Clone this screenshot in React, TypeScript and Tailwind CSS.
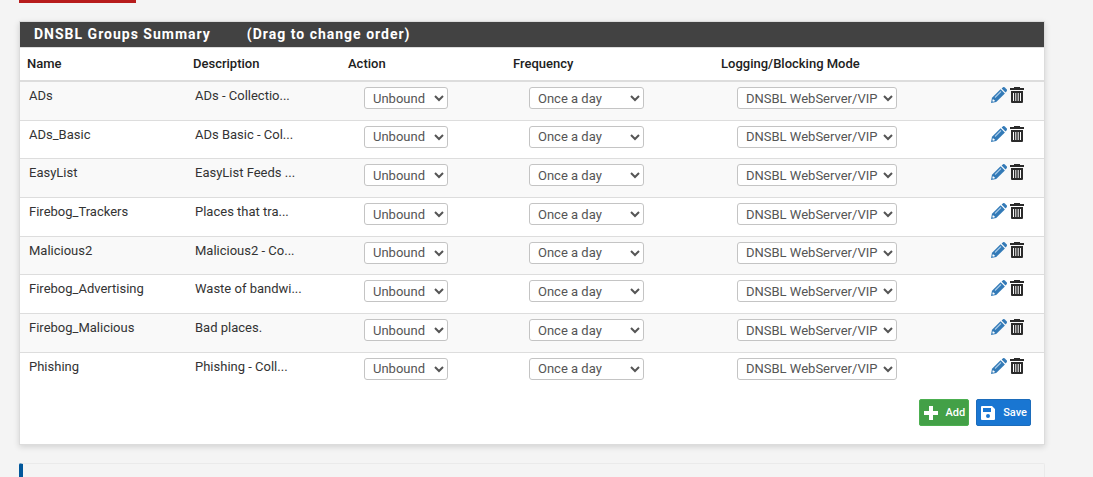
import React from "react";

type Group = { name: string; description: string };

const groups: Group[] = [
  { name: "ADs", description: "ADs - Collectio..." },
  { name: "ADs_Basic", description: "ADs Basic - Col..." },
  { name: "EasyList", description: "EasyList Feeds ..." },
  { name: "Firebog_Trackers", description: "Places that tra..." },
  { name: "Malicious2", description: "Malicious2 - Co..." },
  { name: "Firebog_Advertising", description: "Waste of bandwi..." },
  { name: "Firebog_Malicious", description: "Bad places." },
  { name: "Phishing", description: "Phishing - Coll..." },
];

function PencilIcon() {
  return (
    <svg viewBox="0 0 16 16" className="block size-4" aria-hidden="true">
      <path fill="#337ab7" d="M11.800.4a1.500 1.500 0 0 1 2 0l1.800 1.800a1.500 1.500 0 0 1 0 2l-1.100 1.200L10.600 1.600z" />
      <path fill="#337ab7" d="M9.600 2.200l4.300 4.300-8.700 8.500L0 16l1-5.200z" />
      <path d="M4 10.500L10 4.500" stroke="#a9cbe8" strokeWidth="1.100" />
      <path d="M1.900 11.900l2.300 2.200-2.200.6-.7-.7z" fill="#fff" />
    </svg>
  );
}

function TrashIcon() {
  return (
    <svg viewBox="0 0 14 16" className="block h-4 w-[14px]" aria-hidden="true">
      <path fill="#2b2b2b" d="M4 0h6v1h4v2H0V1h4z" />
      <path
        fill="#2b2b2b"
        fillRule="evenodd"
        d="M1 4h12v11a1 1 0 0 1-1 1H2a1 1 0 0 1-1-1zM3 6v8h1V6zM5.300 6v8h1V6zM7.700 6v8h1V6zM10 6v8h1V6z"
      />
    </svg>
  );
}

function PlusIcon() {
  return (
    <svg viewBox="0 0 14 14" className="block size-[14px]" aria-hidden="true">
      <path fill="#fff" d="M5 0h4v5h5v4H9v5H5V9H0V5h5z" />
    </svg>
  );
}

function SaveIcon() {
  return (
    <svg viewBox="0 0 14 14" className="block size-[14px]" aria-hidden="true">
      <path
        fill="#fff"
        fillRule="evenodd"
        d="M1 0h10l3 3v10a1 1 0 0 1-1 1H1a1 1 0 0 1-1-1V1a1 1 0 0 1 1-1zM2 2v4h8V2zM7 8a2 2 0 1 0 0 4 2 2 0 0 0 0-4z"
      />
    </svg>
  );
}

function Choice({ label, value, width }: { label: string; value: string; width: string }) {
  return (
    <select
      aria-label={label}
      className={`block h-[22px] rounded-[3px] border border-[#c4c4c4] bg-white pl-1 text-[13px] text-[#555] ${width}`}
    >
      <option>{value}</option>
    </select>
  );
}

const th = "px-[7px] py-[7px] text-left align-middle font-medium";
const td = "px-[9px] pt-[5px] align-top";
const choiceCell = "pt-[5px] pl-[23px] align-top";
const button = "flex h-[27px] items-center gap-2 rounded-[2px] border pr-[3px] pl-1";

export default function App() {
  return (
    <div className="min-h-screen bg-[#f4f4f4] pr-12 pl-[19px] font-[Roboto,sans-serif] text-[13px] leading-[18px] text-[#212121]">
      <div className="h-[3px] w-[117px] bg-[#b71c1c]" />
      <section className="mt-[18px] border border-[#dcdcdc] bg-white shadow-[0_2px_6px_rgba(0,0,0,0.14)]">
        <h2 className="flex h-[25px] items-center gap-9 bg-[#424242] px-[14px] pb-[2px] text-sm font-bold tracking-[1px] text-white">
          <span>DNSBL Groups Summary</span>
          <span>(Drag to change order)</span>
        </h2>
        <table className="h-[343px] w-full table-fixed border-separate border-spacing-0">
          <colgroup>
            <col className="w-[166px]" />
            <col className="w-[155px]" />
            <col className="w-[165px]" />
            <col className="w-[208px]" />
            <col className="w-[268px]" />
            <col className="w-[62px]" />
          </colgroup>
          <thead>
            <tr className="*:border-t *:border-b-2 *:border-[#ddd]">
              <th className={th}>Name</th>
              <th className={th}>Description</th>
              <th className={th}>Action</th>
              <th className={th}>Frequency</th>
              <th className={th}>Logging/Blocking Mode</th>
              <td />
            </tr>
          </thead>
          <tbody className="text-[#333]">
            {groups.map((g) => (
              <tr key={g.name} className="odd:bg-[#f9f9f9] not-last:*:border-b not-last:*:border-[#ddd]">
                <td className={td}>{g.name}</td>
                <td className={td}>{g.description}</td>
                <td className={choiceCell}>
                  <Choice label={`Action for ${g.name}`} value="Unbound" width="w-[84px]" />
                </td>
                <td className={choiceCell}>
                  <Choice label={`Frequency for ${g.name}`} value="Once a day" width="w-[115px]" />
                </td>
                <td className={choiceCell}>
                  <Choice label={`Logging mode for ${g.name}`} value="DNSBL WebServer/VIP" width="w-[160px]" />
                </td>
                <td className={td}>
                  <div className="flex gap-[3px]">
                    <a href="#edit" aria-label={`Edit ${g.name}`}>
                      <PencilIcon />
                    </a>
                    <a href="#delete" aria-label={`Delete ${g.name}`}>
                      <TrashIcon />
                    </a>
                  </div>
                </td>
              </tr>
            ))}
          </tbody>
        </table>
        <div className="flex justify-end gap-[7px] px-[13px] pt-[9px] pb-[18px] text-[11px] font-medium text-white">
          <button type="button" className={`${button} border-[#4caf50] bg-[#43a047]`}>
            <PlusIcon />
            Add
          </button>
          <button type="button" className={`${button} border-[#1c6cbb] bg-[#1976d2]`}>
            <SaveIcon />
            Save
          </button>
        </div>
      </section>
      <div className="mt-[18px] h-[14px] rounded-t-[2px] border-t border-r border-l-4 border-t-[#eaeaea] border-r-[#eaeaea] border-l-[#01579b]" />
    </div>
  );
}
